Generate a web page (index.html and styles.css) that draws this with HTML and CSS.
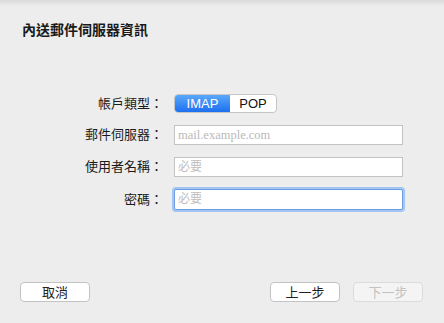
FILE: index.html
```html
<!DOCTYPE html>
<html lang="zh-Hant">
  <head>
    <meta charset="UTF-8" />
    <title>內送郵件伺服器資訊</title>
    <link rel="stylesheet" href="styles.css">
  </head>
  <body>
    <div class="sheet">
      <h1 class="title">內送郵件伺服器資訊</h1>

      <!-- 帳戶設定 -->
      <div class="form">
        <label class="label">帳戶類型：</label>
        <div class="segmented">
          <span class="seg active">IMAP</span>
          <span class="seg">POP</span>
        </div>

        <label class="label">郵件伺服器：</label>
        <input class="field" type="text" placeholder="mail.example.com" />

        <label class="label">使用者名稱：</label>
        <input class="field cjk" type="text" placeholder="必要" />

        <label class="label">密碼：</label>
        <input class="field cjk focused" type="password" placeholder="必要" />
      </div>

      <!-- 按鈕 -->
      <div class="footer">
        <button class="btn">取消</button>
        <div class="nav-buttons">
          <button class="btn">上一步</button>
          <button class="btn" disabled>下一步</button>
        </div>
      </div>
    </div>
  </body>
</html>
```

FILE: styles.css
```css
/* 基本 */
body {
  margin: 0;
  padding: 0;
  background-color: #ededed;
  font-family: "Liberation Sans", "Noto Sans CJK TC", sans-serif;
  font-size: 13px;
  color: #1a1a1a;
}

.sheet {
  height: 323px;
  display: flex;
  flex-direction: column;
  box-sizing: border-box;
  background: linear-gradient(#d9d9d9, #ededed 6px);
}

.title {
  margin: 0;
  padding: 21px 22px 0;
  font-size: 14px;
  font-weight: bold;
  line-height: 18px;
}

/* 表單 */
.form {
  display: grid;
  grid-template-columns: 163px 1fr;
  column-gap: 11px;
  row-gap: 12px;
  align-items: center;
  margin-top: 55px;
  padding-right: 41px;
}

.label {
  text-align: right;
  line-height: 16px;
}

.segmented {
  display: flex;
  width: 103px;
  height: 19px;
  box-sizing: border-box;
  border: 1px solid #c6c6c6;
  border-radius: 4px;
  background-color: #fff;
  overflow: hidden;
}

.seg {
  flex: 1;
  text-align: center;
  line-height: 17px;
  font-size: 13px;
  color: #111;
}

.seg.active {
  flex: 0 0 55px;
  color: #fff;
  background: linear-gradient(#5aa8fa, #1c70f0);
}

.field {
  height: 20px;
  box-sizing: border-box;
  margin: 0;
  padding: 0 3px;
  border: 1px solid #c2c2c2;
  border-radius: 0;
  background-color: #fff;
  font-family: "Liberation Serif", "Noto Sans CJK TC", serif;
  font-size: 12.5px;
  outline: none;
}

.field::placeholder {
  color: #b9b9b9;
}

.field.cjk::placeholder {
  font-family: "Noto Sans CJK TC", sans-serif;
  font-size: 12px;
  color: #bdbdbd;
}

.field.focused {
  border-color: #6d9ee2;
  border-radius: 2px;
  box-shadow: 0 0 0 2px #a3c5f4;
  height: 21px;
}

/* 底部按鈕 */
.footer {
  margin-top: auto;
  display: flex;
  justify-content: space-between;
  padding: 0 21px 21px 20px;
}

.nav-buttons {
  display: flex;
  gap: 13px;
}

.btn {
  width: 70px;
  height: 20px;
  padding: 0;
  border: 1px solid #c3c3c3;
  border-radius: 4px;
  background-color: #fff;
  font-family: "Noto Sans CJK TC", sans-serif;
  font-size: 13px;
  line-height: 18px;
  color: #222;
}

.btn:disabled {
  background-color: #f4f4f4;
  border-color: #dcdcdc;
  color: #c2c2c2;
}
```
